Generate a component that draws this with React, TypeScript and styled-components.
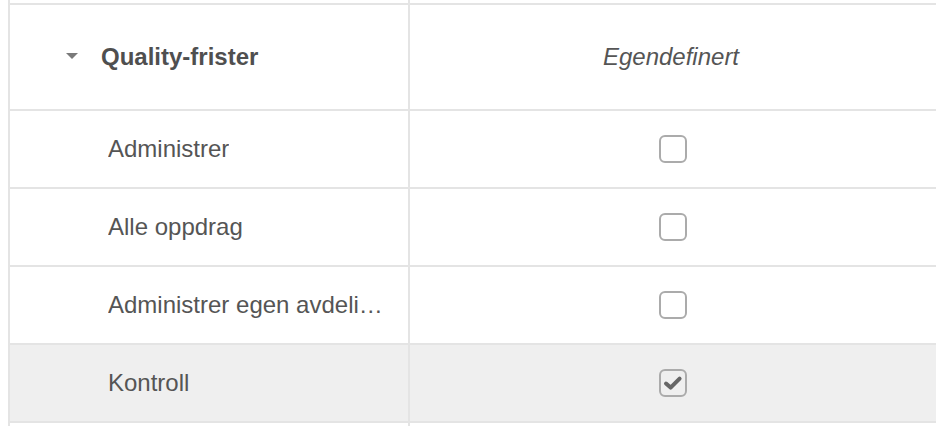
import React from "react";
import styled, { createGlobalStyle } from "styled-components";

const Global = createGlobalStyle`
  html, body { margin: 0; padding: 0; background: #fff; }
  body { font-family: "Liberation Sans", Arial, Helvetica, sans-serif; overflow: hidden; }
`;

const Table = styled.div`
  margin-left: 8px;
  border-left: 2px solid #e4e4e4;
  display: flex;
  flex-direction: column;
  width: 926px;
`;

const Row = styled.div<{ $h: number; $shaded?: boolean }>`
  display: flex;
  height: ${(p) => p.$h}px;
  border-bottom: 2px solid #e4e4e4;
  background: ${(p) => (p.$shaded ? "#efefef" : "#fff")};
  flex-shrink: 0;
`;

const NameCell = styled.div<{ $indent: number }>`
  width: 400px;
  box-sizing: border-box;
  border-right: 2px solid #e4e4e4;
  display: flex;
  align-items: center;
  padding-left: ${(p) => p.$indent}px;
  padding-right: 24px;
  min-width: 0;
`;

const ValueCell = styled.div`
  flex: 1;
  display: flex;
  align-items: center;
  justify-content: center;
`;

const GroupLabel = styled.span`
  font-size: 24px;
  font-weight: bold;
  color: #4f4f4f;
`;

const Label = styled.span`
  font-size: 24px;
  color: #555;
  white-space: nowrap;
  overflow: hidden;
  text-overflow: ellipsis;
`;

const ColumnTitle = styled.span`
  font-size: 24px;
  font-style: italic;
  color: #555;
  margin-left: -4px;
`;

const Caret = styled.span`
  width: 0;
  height: 0;
  border-left: 6px solid transparent;
  border-right: 6px solid transparent;
  border-top: 6px solid #7a7a7a;
  margin-right: 23px;
  margin-top: -2px;
`;

const Box = styled.span`
  width: 28px;
  height: 28px;
  box-sizing: border-box;
  border: 2px solid #ababab;
  border-radius: 6px;
  display: flex;
  align-items: center;
  justify-content: center;
  background: transparent;
`;

const Checkbox = ({ checked }: { checked?: boolean }) => (
  <Box>
    {checked && (
      <svg width="22" height="22" viewBox="0 0 22 22">
        <polyline
          points="4,11.5 8.6,15.6 17.6,6.6"
          fill="none"
          stroke="#666"
          strokeWidth="4"
          strokeLinecap="round"
          strokeLinejoin="round"
        />
      </svg>
    )}
  </Box>
);

const items = [
  { label: "Administrer", checked: false },
  { label: "Alle oppdrag", checked: false },
  { label: "Administrer egen avdeling", checked: false },
  { label: "Kontroll", checked: true, shaded: true },
];

export default function App() {
  return (
    <>
      <Global />
      <Table>
        <Row $h={3}>
          <NameCell $indent={0} />
          <ValueCell />
        </Row>
        <Row $h={104}>
          <NameCell $indent={56}>
            <Caret />
            <GroupLabel>Quality-frister</GroupLabel>
          </NameCell>
          <ValueCell>
            <ColumnTitle>Egendefinert</ColumnTitle>
          </ValueCell>
        </Row>
        {items.map((it) => (
          <Row key={it.label} $h={76} $shaded={it.shaded}>
            <NameCell $indent={98}>
              <Label>{it.label}</Label>
            </NameCell>
            <ValueCell>
              <Checkbox checked={it.checked} />
            </ValueCell>
          </Row>
        ))}
        <Row $h={20}>
          <NameCell $indent={0} />
          <ValueCell />
        </Row>
      </Table>
    </>
  );
}
